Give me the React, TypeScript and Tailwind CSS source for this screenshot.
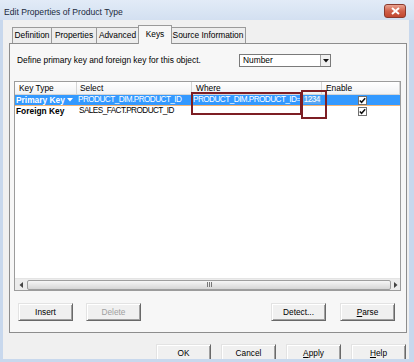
import React from "react";

const btn =
  "h-[18px] w-[55px] flex items-center justify-center bg-[#f0f0f0] border-t border-l border-[#e3e3e3] border-r border-b border-r-[#696969] border-b-[#696969] shadow-[inset_1px_1px_0_#ffffff,inset_-1px_-1px_0_#a0a0a0] text-[8.3px] leading-none whitespace-nowrap";

const up = "text-[8.2px] tracking-[-0.55px] whitespace-nowrap";

function Check() {
  return (
    <div className="w-[9px] h-[9px] bg-white border border-[#707070] flex items-center justify-center">
      <svg width="7" height="7" viewBox="0 0 7 7">
        <path d="M0.8 3.4 L2.6 5.3 L6.2 1.2" stroke="#111" strokeWidth="1.5" fill="none" />
      </svg>
    </div>
  );
}

export default function App() {
  return (
    <div className="w-[414px] h-[362px] overflow-hidden bg-[#c8d8ed] flex flex-col font-['Liberation_Sans',Arial,sans-serif] text-[8.4px] text-black leading-none">
      {/* Title bar */}
      <div className="h-[20px] shrink-0 flex items-start justify-between pl-[4px] pr-[8px] bg-gradient-to-b from-[#e2ebf7] to-[#d3e0f1]">
        <span className="mt-[8px] text-[8.6px] text-[#1b2a3d] whitespace-nowrap">Edit Properties of Product Type</span>
        <div className="mt-[4px] w-[22px] h-[14px] rounded-[3px] border border-[#8a3a2e] bg-gradient-to-b from-[#e9a392] via-[#d0604a] to-[#c2472f] flex items-center justify-center">
          <svg width="9" height="8" viewBox="0 0 9 8">
            <path d="M1 1 L8 7 M8 1 L1 7" stroke="#fff" strokeWidth="2" />
          </svg>
        </div>
      </div>

      {/* Body */}
      <div className="ml-[3px] w-[406px] h-[339px] shrink-0 bg-[#f0f0f0] flex flex-col overflow-hidden">
        {/* Tabs */}
        <div className="h-[23px] shrink-0 flex items-end pl-[9px] whitespace-nowrap">
          <div className="h-[16px] w-[39px] border-t border-l border-[#9a9a9a] flex items-center justify-center bg-[#ededed]">Definition</div>
          <div className="h-[16px] w-[45px] border-t border-l border-[#9a9a9a] flex items-center justify-center bg-[#ededed]">Properties</div>
          <div className="h-[16px] w-[42px] border-t border-l border-[#9a9a9a] flex items-center justify-center bg-[#ededed]">Advanced</div>
          <div className="relative z-10 -mb-[1px] h-[19px] w-[34px] border-t border-l border-r border-[#9a9a9a] bg-[#f7f7f7] flex items-start justify-center pt-[4px] -mr-[1px]">Keys</div>
          <div className="h-[16px] w-[75px] border-t border-r border-[#9a9a9a] flex items-center justify-center bg-[#ededed]">Source Information</div>
        </div>

        {/* Panel */}
        <div className="ml-[6px] w-[398px] h-[290px] shrink-0 border border-[#8d8d8d] bg-[#f7f7f7] flex flex-col">
          <div className="mt-[10px] h-[13px] flex items-center">
            <span className="ml-[7px] w-[222px] whitespace-nowrap">Define primary key and foreign key for this object.</span>
            <div className="w-[92px] h-[13px] bg-white border border-[#7a7a7a] flex items-center justify-between">
              <span className="ml-[3px]">Number</span>
              <div className="w-[10px] h-[11px] bg-[#f0f0f0] border-l border-[#a0a0a0] flex items-center justify-center">
                <svg width="6" height="4" viewBox="0 0 6 4">
                  <path d="M0 0 L6 0 L3 3.5 Z" fill="#111" />
                </svg>
              </div>
            </div>
          </div>

          {/* Table */}
          <div className="relative ml-[4px] mt-[14px] w-[387px] h-[210px] border border-[#9c9c9c] bg-white flex flex-col">
            <div className="h-[13px] shrink-0 flex border-b border-[#d5d5d5] bg-gradient-to-b from-[#ffffff] to-[#f1f2f4] whitespace-nowrap">
              <div className="w-[62px] border-r border-[#d5d5d5] flex items-center pl-[4px]">Key Type</div>
              <div className="w-[115px] border-r border-[#d5d5d5] flex items-center pl-[3px]">Select</div>
              <div className="w-[130px] border-r border-[#d5d5d5] flex items-center pl-[4px]">Where</div>
              <div className="flex-1 border-r border-[#d5d5d5] flex items-center pl-[4px]">Enable</div>
            </div>
            <div className="h-[11px] shrink-0 flex bg-[#3399ff] text-white border-b border-[#f3b77a]">
              <div className="w-[62px] flex items-center pl-[1px] font-bold whitespace-nowrap">
                Primary Key
                <svg className="ml-[2px]" width="6" height="4" viewBox="0 0 6 4">
                  <path d="M0 0 L6 0 L3 3.5 Z" fill="#fff" />
                </svg>
              </div>
              <div className={"w-[115px] flex items-center pl-[1px] " + up}>PRODUCT_DIM.PRODUCT_ID</div>
              <div className={"w-[130px] flex items-center pl-[1px] " + up}>
                <span>PRODUCT_DIM.PRODUCT_ID=</span>
                <span className="ml-[2px] bg-[#5aa7f2] px-[1px]">1234</span>
              </div>
              <div className="flex-1 flex items-center pl-[36px]">
                <Check />
              </div>
            </div>
            <div className="h-[11px] shrink-0 flex">
              <div className="w-[62px] flex items-center pl-[1px] font-bold whitespace-nowrap">Foreign Key</div>
              <div className={"w-[115px] flex items-center pl-[2px] " + up}>SALES_FACT.PRODUCT_ID</div>
              <div className="w-[130px]" />
              <div className="flex-1 flex items-center pl-[36px]">
                <Check />
              </div>
            </div>
            <div className="flex-1" />
            {/* Scrollbar */}
            <div className="h-[12px] shrink-0 flex items-center bg-[#ececec] border-t border-[#e4e4e4]">
              <div className="w-[12px] h-full flex items-center justify-center">
                <svg width="4" height="6" viewBox="0 0 4 6">
                  <path d="M4 0 L4 6 L0.5 3 Z" fill="#444" />
                </svg>
              </div>
              <div className="flex-1 h-[10px] rounded-[2px] border border-[#9e9e9e] bg-gradient-to-b from-[#f6f6f6] via-[#e6e6e6] to-[#d6d6d6] flex items-center justify-center">
                <div className="flex gap-[1px]">
                  <div className="w-[1px] h-[5px] bg-[#777]" />
                  <div className="w-[1px] h-[5px] bg-[#777]" />
                  <div className="w-[1px] h-[5px] bg-[#777]" />
                </div>
              </div>
              <div className="w-[9px] h-full flex items-center justify-center">
                <svg width="4" height="6" viewBox="0 0 4 6">
                  <path d="M0 0 L0 6 L3.5 3 Z" fill="#444" />
                </svg>
              </div>
            </div>

            {/* Annotation boxes */}
            <div className="absolute left-[176px] top-[10px] w-[111px] h-[23px] border-2 border-[#7d1e24]" />
            <div className="absolute left-[286px] top-[8px] w-[26px] h-[29px] border-2 border-[#7d1e24]" />
          </div>

          {/* Panel buttons */}
          <div className="mt-[12px] flex items-center pl-[8px] pr-[11px]">
            <div className={btn}>Insert</div>
            <div className={btn + " ml-[13px] text-[#a0a0a0]"}>Delete</div>
            <div className="flex-1" />
            <div className={btn}>Detect...</div>
            <div className={btn + " ml-[14px]"}>
              <span className="underline">P</span>arse
            </div>
          </div>
        </div>

        {/* Dialog buttons */}
        <div className="mt-[11px] flex justify-end gap-[10px] pr-[3px]">
          <div className={btn + " border-[#3c3c3c]"}>OK</div>
          <div className={btn}>Cancel</div>
          <div className={btn}>
            <span className="underline">A</span>pply
          </div>
          <div className={btn}>
            <span className="underline">H</span>elp
          </div>
        </div>
      </div>
    </div>
  );
}
